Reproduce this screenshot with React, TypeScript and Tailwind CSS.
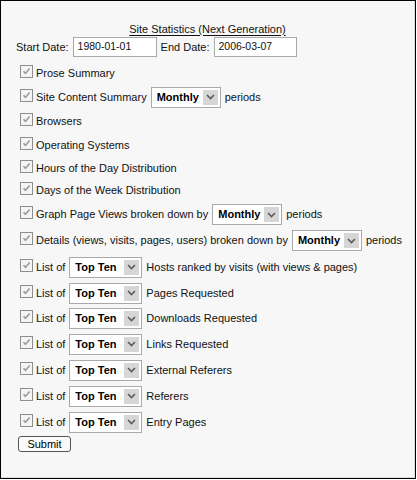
import React from "react";

const font = { fontFamily: '"Liberation Sans", Arial, sans-serif' };

function Check() {
  return (
    <span className="relative mr-[3px] inline-block h-[13px] w-[13px] shrink-0 -translate-y-[2px] border border-[#8e8e8e] bg-[#f4f4f4]">
      <svg viewBox="0 0 11 11" className="absolute left-0 top-0 h-[11px] w-[11px]">
        <path d="M2.5 5.2 L4.5 7.4 L8.6 2.6" fill="none" stroke="#9a9a9a" strokeWidth="1.6" />
      </svg>
    </span>
  );
}

function Select({ label, w }: { label: string; w: string }) {
  return (
    <span className={`mx-[4px] inline-flex h-[21px] ${w} items-center justify-between border border-[#a9a9a9] bg-white pl-[5px] pr-[2px]`}>
      <span className="text-[11px] font-bold text-black">{label}</span>
      <span className="flex h-[15px] w-[15px] items-center justify-center bg-[#d6d6d6]">
        <svg viewBox="0 0 9 6" className="h-[6px] w-[9px]">
          <path d="M1 1 L4.5 4.5 L8 1" fill="none" stroke="#5a5a5a" strokeWidth="1.6" />
        </svg>
      </span>
    </span>
  );
}

type Row = { h: string; content: React.ReactNode };

const rows: Row[] = [
  { h: "h-[24px]", content: <>Prose Summary</> },
  {
    h: "h-[24px]",
    content: (
      <>
        Site Content Summary
        <Select label="Monthly" w="w-[70px]" />
        periods
      </>
    ),
  },
  { h: "h-[24px]", content: <>Browsers</> },
  { h: "h-[24px]", content: <>Operating Systems</> },
  { h: "h-[22px]", content: <>Hours of the Day Distribution</> },
  { h: "h-[23px]", content: <>Days of the Week Distribution</> },
  {
    h: "h-[25px]",
    content: (
      <>
        Graph Page Views broken down by
        <Select label="Monthly" w="w-[70px]" />
        periods
      </>
    ),
  },
  {
    h: "h-[27px]",
    content: (
      <>
        Details (views, visits, pages, users) broken down by
        <Select label="Monthly" w="w-[70px]" />
        periods
      </>
    ),
  },
  ...[
    "Hosts ranked by visits (with views & pages)",
    "Pages Requested",
    "Downloads Requested",
    "Links Requested",
    "External Referers",
    "Referers",
    "Entry Pages",
  ].map((t, i) => ({
    h: i === 2 ? "h-[25px]" : "h-[26px]",
    content: (
      <>
        List of
        <Select label="Top Ten" w="w-[73px]" />
        {t}
      </>
    ),
  })),
];

export default function App() {
  return (
    <div className="h-[480px] w-[417px] bg-white" style={font}>
      <div className="h-[479px] w-[416px] border border-black bg-[#f7f7f7] text-[11px] text-[#111]">
        <div className="flex h-full flex-col border-b border-r border-[#dcdcdc] pl-[15px] pt-[20px]">
          <div className="flex h-[16px] items-center justify-center pr-[15px]">
            <span className="underline underline-offset-2">Site Statistics (Next Generation)</span>
          </div>
          <div className="flex h-[20px] items-center">
            <span>Start Date:</span>
            <span className="mx-[4px] flex h-[20px] w-[84px] items-center border border-[#a9a9a9] bg-white pl-[4px] text-[10.5px]">
              1980-01-01
            </span>
            <span>End Date:</span>
            <span className="ml-[4px] flex h-[20px] w-[83px] items-center border border-[#a9a9a9] bg-white pl-[4px] text-[10.5px]">
              2006-03-07
            </span>
          </div>
          <div className="h-[4px]" />
          {rows.map((r, i) => (
            <div key={i} className={`flex ${r.h} items-center pl-[4px] whitespace-nowrap`}>
              <Check />
              {r.content}
            </div>
          ))}
          <div className="pl-[2px] pt-[1px]">
            <button className="flex h-[16px] w-[53px] items-center justify-center rounded-[3px] border border-[#555] bg-[#fafafa] text-[11px] text-black">
              Submit
            </button>
          </div>
        </div>
      </div>
    </div>
  );
}
